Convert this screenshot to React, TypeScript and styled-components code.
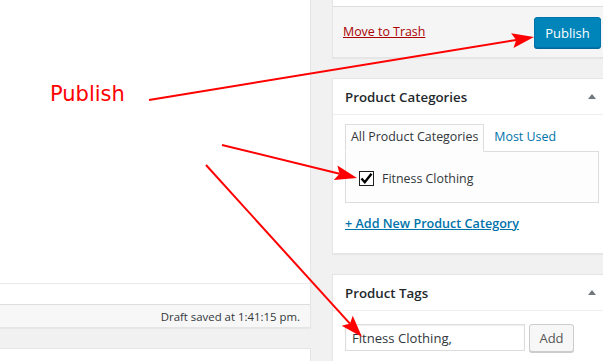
import React from "react";
import styled, { createGlobalStyle } from "styled-components";

const Global = createGlobalStyle`
  html, body { margin: 0; padding: 0; }
  body {
    background: #f1f1f1;
    font-family: "Open Sans", "Noto Sans", sans-serif;
    font-size: 12.4px;
    color: #32373c;
    width: 603px;
    height: 361px;
    overflow: hidden;
  }
`;

const Page = styled.div`
  position: relative;
  display: flex;
  align-items: flex-start;
  width: 603px;
  height: 361px;
  overflow: hidden;
`;

const MainColumn = styled.div`
  width: 311px;
  flex: none;
  display: flex;
  flex-direction: column;
  gap: 20px;
`;

const EditorBox = styled.div`
  background: #fff;
  border-right: 1px solid #e5e5e5;
  border-bottom: 1px solid #e5e5e5;
  box-shadow: 0 1px 1px rgba(0, 0, 0, 0.04);
`;

const EditorArea = styled.div`
  height: 283px;
  border-bottom: 1px solid #e9e9e9;
`;

const EditorRow = styled.div`
  height: 20px;
  border-bottom: 1px solid #dedede;
`;

const StatusBar = styled.div`
  height: 22px;
  background: #f7f7f7;
  display: flex;
  align-items: center;
  justify-content: flex-end;
  padding-right: 10px;
  font-size: 11.4px;
  color: #32373c;
`;

const LowerBox = styled.div`
  background: #fff;
  border-top: 1px solid #e5e5e5;
  border-right: 1px solid #e5e5e5;
  height: 40px;
`;

const Sidebar = styled.div`
  width: 280px;
  flex: none;
  margin-left: 21px;
  display: flex;
  flex-direction: column;
  gap: 20px;
`;

const PostBox = styled.div`
  background: #fff;
  border: 1px solid #e5e5e5;
  box-shadow: 0 1px 1px rgba(0, 0, 0, 0.04);
`;

const PublishBox = styled(PostBox)`
  border-top: none;
`;

const MiscArea = styled.div`
  height: 6px;
  border-bottom: 1px solid #dddddd;
`;

const MajorActions = styled.div`
  background: #f5f5f5;
  height: 50px;
  padding: 0 10px;
  box-sizing: border-box;
  display: flex;
  align-items: center;
  justify-content: space-between;
`;

const TrashLink = styled.a`
  color: #a00;
  text-decoration: underline;
  font-size: 12.4px;
  margin-bottom: 1px;
`;

const PrimaryButton = styled.button`
  height: 31px;
  width: 67px;
  padding: 0;
  background: #0085ba;
  border: 1px solid #0073aa;
  border-radius: 3px;
  box-shadow: 0 1px 0 #006799;
  color: #fff;
  font-family: "Open Sans", "Noto Sans", sans-serif;
  font-size: 13px;
  margin-top: 1px;
`;

const BoxHeader = styled.div`
  display: flex;
  align-items: center;
  justify-content: space-between;
  padding: 8px 15px 8px 12px;
  height: 19px;
  border-bottom: 1px solid #eeeeee;
  font-size: 13.3px;
  font-weight: 600;
  color: #23282d;
`;

const Toggle = styled.span`
  width: 0;
  height: 0;
  border-left: 4px solid transparent;
  border-right: 4px solid transparent;
  border-bottom: 5px solid #72777c;
`;

const Inside = styled.div<{ $top: number; $bottom: number }>`
  padding: ${(p) => p.$top}px 12px ${(p) => p.$bottom}px 12px;
`;

const Tabs = styled.ul`
  list-style: none;
  margin: 0 0 -1px 0;
  padding: 0;
  display: flex;
  gap: 4px;
  position: relative;
  z-index: 1;
`;

const Tab = styled.li<{ $active?: boolean }>`
  padding: 3px 5px 5px;
  line-height: 18px;
  font-size: 12.4px;
  border: 1px solid ${(p) => (p.$active ? "#dddddd" : "transparent")};
  border-bottom-color: ${(p) => (p.$active ? "#fdfdfd" : "transparent")};
  background: ${(p) => (p.$active ? "#fdfdfd" : "transparent")};
  color: ${(p) => (p.$active ? "#32373c" : "#0073aa")};
`;

const TabPanel = styled.div`
  border: 1px solid #dddddd;
  background: #fdfdfd;
  padding: 12px 0 10px 13px;
`;

const CheckRow = styled.label`
  display: flex;
  align-items: center;
  gap: 8px;
  height: 28px;
  font-size: 12.4px;
  color: #32373c;
`;

const CheckBox = styled.span`
  width: 13px;
  height: 13px;
  border: 1px solid #1e1e1e;
  background: #fff;
  display: flex;
  align-items: center;
  justify-content: center;
`;

const AddNew = styled.a`
  display: block;
  margin-top: 11px;
  line-height: 19px;
  color: #0073aa;
  text-decoration: underline;
  font-weight: 600;
  font-size: 12.6px;
`;

const TagRow = styled.div`
  display: flex;
  gap: 4px;
  align-items: flex-start;
`;

const TagInput = styled.div`
  width: 180px;
  height: 27px;
  box-sizing: border-box;
  border: 1px solid #dddddd;
  box-shadow: inset 0 1px 2px rgba(0, 0, 0, 0.07);
  background: #fff;
  padding: 0 6px;
  display: flex;
  align-items: center;
  font-size: 13.1px;
  color: #32373c;
`;

const SecondaryButton = styled.button`
  width: 45px;
  height: 28px;
  box-sizing: border-box;
  padding: 0;
  background: #f7f7f7;
  border: 1px solid #cccccc;
  border-radius: 3px;
  box-shadow: 0 1px 0 #cccccc;
  color: #555;
  font-family: "Open Sans", "Noto Sans", sans-serif;
  font-size: 13px;
`;

const Annotations = styled.div`
  position: absolute;
  inset: 0;
  pointer-events: none;
`;

const Callout = styled.div`
  position: absolute;
  left: 50px;
  top: 82px;
  font-family: "DejaVu Sans", sans-serif;
  font-size: 21px;
  line-height: 24px;
  color: #ff0000;
`;

const ArrowLayer = styled.svg`
  position: absolute;
  left: 0;
  top: 0;
`;

type Pt = [number, number];

function Arrow({ from, to }: { from: Pt; to: Pt }) {
  const dx = to[0] - from[0];
  const dy = to[1] - from[1];
  const len = Math.hypot(dx, dy);
  const ux = dx / len;
  const uy = dy / len;
  const L = 22;
  const w = 7.5;
  const bx = to[0] - L * ux;
  const by = to[1] - L * uy;
  const p1: Pt = [bx - w * uy, by + w * ux];
  const p2: Pt = [bx + w * uy, by - w * ux];
  const notchX = to[0] - (L - 4) * ux;
  const notchY = to[1] - (L - 4) * uy;
  return (
    <g>
      <line
        x1={from[0]}
        y1={from[1]}
        x2={notchX}
        y2={notchY}
        stroke="#ff0000"
        strokeWidth={2}
      />
      <polygon
        points={`${to[0]},${to[1]} ${p1[0]},${p1[1]} ${notchX},${notchY} ${p2[0]},${p2[1]}`}
        fill="#ff0000"
      />
    </g>
  );
}

export default function App() {
  return (
    <>
      <Global />
      <Page>
        <MainColumn>
          <EditorBox>
            <EditorArea />
            <EditorRow />
            <StatusBar>Draft saved at 1:41:15 pm.</StatusBar>
          </EditorBox>
          <LowerBox />
        </MainColumn>

        <Sidebar>
          <PublishBox>
            <MiscArea />
            <MajorActions>
              <TrashLink>Move to Trash</TrashLink>
              <PrimaryButton>Publish</PrimaryButton>
            </MajorActions>
          </PublishBox>

          <PostBox>
            <BoxHeader>
              <span>Product Categories</span>
              <Toggle />
            </BoxHeader>
            <Inside $top={9} $bottom={20}>
              <Tabs>
                <Tab $active>All Product Categories</Tab>
                <Tab>Most Used</Tab>
              </Tabs>
              <TabPanel>
                <CheckRow>
                  <CheckBox>
                    <svg width="13" height="13" viewBox="0 0 13 13">
                      <path
                        d="M1.5 6.5 L4.8 10.2 L11.5 1.8"
                        fill="none"
                        stroke="#000"
                        strokeWidth="2.4"
                        strokeLinejoin="miter"
                      />
                    </svg>
                  </CheckBox>
                  Fitness Clothing
                </CheckRow>
              </TabPanel>
              <AddNew>+ Add New Product Category</AddNew>
            </Inside>
          </PostBox>

          <PostBox>
            <BoxHeader>
              <span>Product Tags</span>
              <Toggle />
            </BoxHeader>
            <Inside $top={13} $bottom={12}>
              <TagRow>
                <TagInput>Fitness Clothing,</TagInput>
                <SecondaryButton>Add</SecondaryButton>
              </TagRow>
            </Inside>
          </PostBox>
        </Sidebar>

        <Annotations>
          <Callout>Publish</Callout>
          <ArrowLayer width="603" height="361" viewBox="0 0 603 361">
            <Arrow from={[149, 100]} to={[534, 37]} />
            <Arrow from={[222, 145]} to={[357, 178]} />
            <Arrow from={[206, 165]} to={[362, 337]} />
          </ArrowLayer>
        </Annotations>
      </Page>
    </>
  );
}
